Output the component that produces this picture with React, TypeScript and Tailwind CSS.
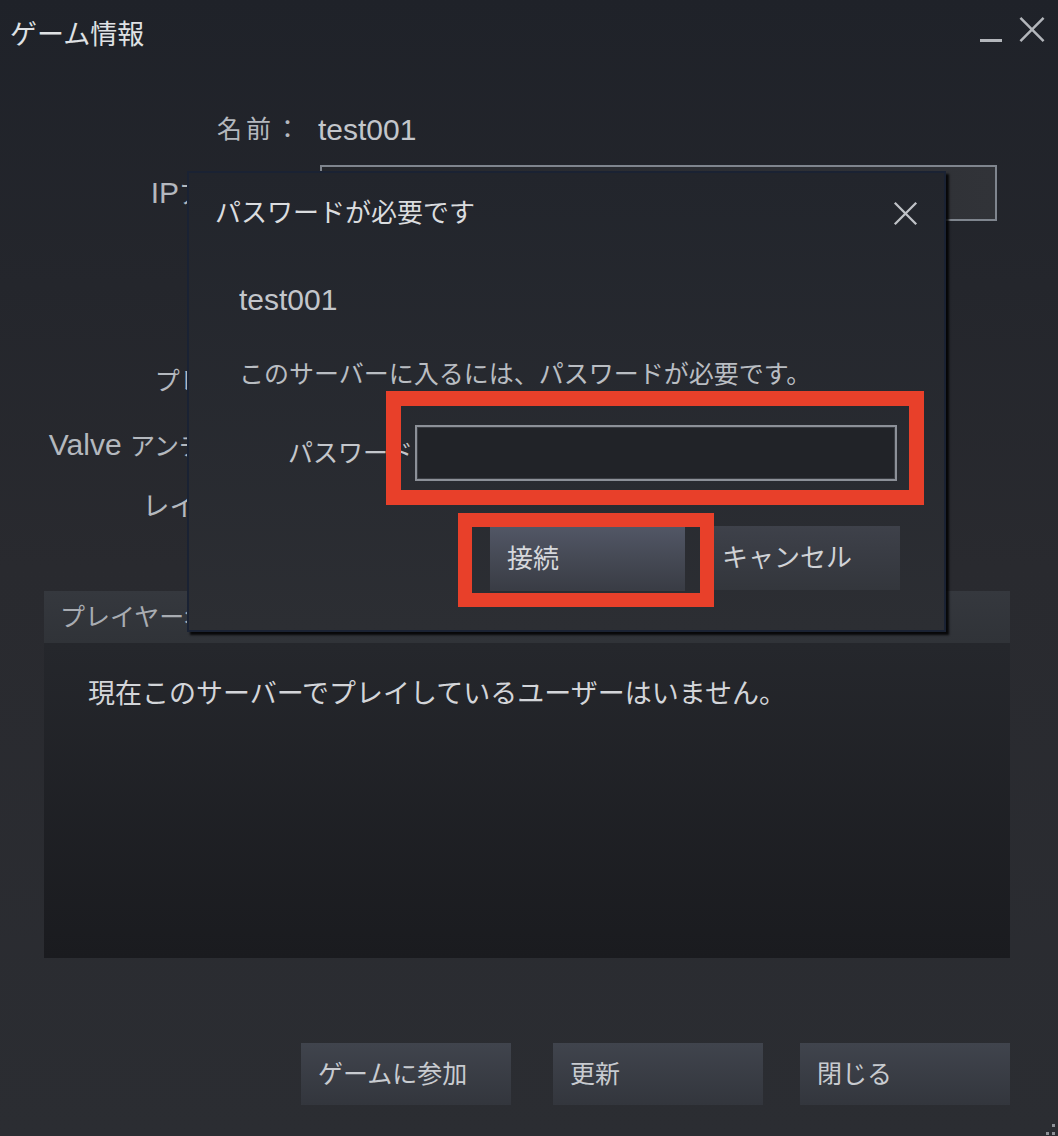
import React from 'react';

// Steam風「ゲーム情報」ウィンドウ + パスワード入力ダイアログ
const font = "font-['Liberation_Sans','Noto_Sans_CJK_JP',sans-serif]";

function XIcon({ className }: { className?: string }) {
  return (
    <svg viewBox="0 0 28 28" className={className} fill="none" stroke="currentColor" strokeWidth={2.6}>
      <path d="M2 2L26 26M26 2L2 26" />
    </svg>
  );
}

function InfoRow({ label, children }: { label?: React.ReactNode; children?: React.ReactNode }) {
  return (
    <div className="flex h-[63px] items-center">
      <div className="w-[304px] shrink-0 text-right text-[25px] leading-none text-[#b4b8be]">{label}</div>
      <div className="ml-[14px] flex flex-1 items-center">{children}</div>
    </div>
  );
}

function FooterButton({ label, className }: { label: string; className?: string }) {
  return (
    <div
      className={`flex h-[62px] w-[210px] items-center bg-gradient-to-b from-[#40444d] to-[#33363d] pl-[17px] text-[25px] leading-none text-[#c8cbd0] ${className ?? ''}`}
    >
      {label}
    </div>
  );
}

export default function App() {
  return (
    <div
      className={`relative h-[1136px] w-[1058px] overflow-hidden bg-gradient-to-b from-[#1f2229] via-[#292a2f] to-[#2b2d32] ${font}`}
    >
      {/* タイトルバー */}
      <div className="flex h-[98px] items-start justify-between">
        <div className="pl-[10px] pt-[22px] text-[27px] leading-none text-[#dfe1e4]">ゲーム情報</div>
        <div className="flex items-start gap-[16px] pr-[12px] pt-[16px] text-[#b3b6bb]">
          <div className="mt-[23px] h-[3px] w-[22px] bg-[#b3b6bb]" />
          <XIcon className="h-[27px] w-[28px]" />
        </div>
      </div>

      {/* サーバー情報（ゲーム・マップ行はダイアログに完全に隠れている） */}
      <div className="flex flex-col">
        <InfoRow label={<span className="tracking-[4px]">名前：</span>}>
          <span className="text-[30px] leading-none text-[#c3c6cb]">test001</span>
        </InfoRow>
        <InfoRow label={<><span className="text-[30px]">IP</span>アドレス：</>}>
          <div className="ml-[2px] h-[56px] w-[677px] border-2 border-[#7f858e] bg-gradient-to-r from-[#25272c] to-[#313338]" />
        </InfoRow>
        <InfoRow />
        <InfoRow />
        <InfoRow label="プレイヤー：" />
        <InfoRow label={<><span className="text-[30px]">Valve </span>アンチチート：</>} />
        <InfoRow label={<span className="text-[27px]">レイテンシ：</span>} />
      </div>

      {/* プレイヤーリスト */}
      <div className="ml-[44px] mt-[52px] w-[966px]">
        <div className="flex h-[52px] items-center bg-gradient-to-b from-[#35383e] to-[#303338] pl-[16px] text-[25px] leading-none text-[#a8acb2]">
          プレイヤー名
        </div>
        <div className="h-[315px] bg-gradient-to-b from-[#25272c] to-[#1a1b1f] pl-[44px] pt-[38px] text-[27px] leading-none text-[#d3d5d9]">
          現在このサーバーでプレイしているユーザーはいません。
        </div>
      </div>

      {/* 下部ボタン */}
      <div className="mt-[85px] flex pl-[301px]">
        <FooterButton label="ゲームに参加" className="mr-[42px]" />
        <FooterButton label="更新" className="mr-[37px]" />
        <FooterButton label="閉じる" />
      </div>

      {/* リサイズグリップ */}
      <svg className="absolute bottom-0 right-0 h-[16px] w-[16px]" viewBox="0 0 16 16">
        <rect x="10" y="4" width="3" height="3" fill="#8d9096" />
        <rect x="4" y="12" width="3" height="3" fill="#8d9096" />
        <rect x="10" y="12" width="3" height="3" fill="#8d9096" />
      </svg>

      {/* パスワードダイアログ */}
      <div className="absolute left-[187px] top-[171px] h-[461px] w-[759px] border-2 border-[#1a2233] bg-gradient-to-b from-[#22252c] to-[#2c2e33] shadow-[3px_3px_2px_rgba(0,0,0,0.85)]">
        <div className="flex h-[80px] items-center justify-between pl-[26px] pr-[26px]">
          <div className="text-[26px] leading-none text-[#dadcdf]">パスワードが必要です</div>
          <XIcon className="h-[25px] w-[25px] text-[#bfc2c7]" />
        </div>
        <div className="mt-[32px] pl-[50px] text-[30px] leading-none text-[#c3c6cb]">test001</div>
        <div className="mt-[47px] pl-[50px] text-[25px] leading-none text-[#b9bdc2]">
          このサーバーに入るには、パスワードが必要です。
        </div>
        <div className="mt-[38px] flex items-center">
          <div className="w-[224px] shrink-0 text-right text-[25px] leading-none text-[#c3c6cb]">パスワード</div>
          <div className="ml-[2px] h-[56px] w-[482px] border-2 border-[#8c9098] bg-[#212328] shadow-[inset_0_0_0_1px_#3a3d43]" />
        </div>
        <div className="mt-[45px] flex gap-[20px] pl-[301px]">
          <div className="flex h-[65px] w-[195px] items-center bg-gradient-to-b from-[#525766] to-[#393c44] pl-[17px] text-[26px] leading-none text-[#d6d8dc]">
            接続
          </div>
          <div className="flex h-[64px] w-[195px] items-center bg-gradient-to-b from-[#3e414a] to-[#33363c] pl-[17px] text-[26px] leading-none text-[#d0d2d6]">
            キャンセル
          </div>
        </div>
      </div>

      {/* 注釈の赤枠 */}
      <div className="absolute left-[386px] top-[391px] h-[114px] w-[538px] border-[15px] border-[#e8402a]" />
      <div className="absolute left-[458px] top-[513px] h-[94px] w-[256px] border-[14px] border-[#e8402a]" />
    </div>
  );
}
